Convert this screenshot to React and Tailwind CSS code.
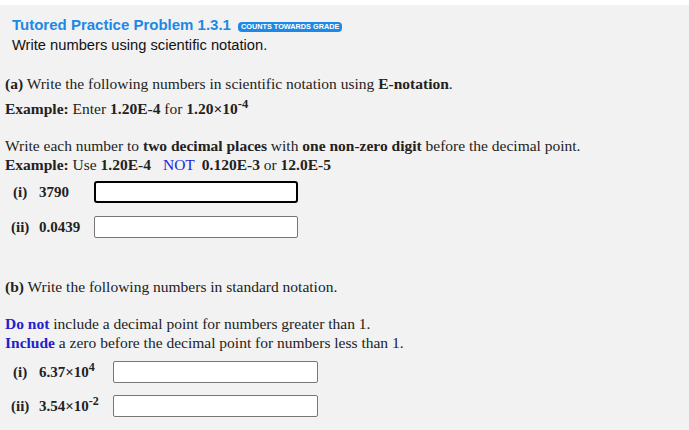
export default function App() {
  const serif = "font-['Liberation_Serif',serif]";
  return (
    <div className="min-h-[430px] w-[689px] bg-white">
      <div className="h-[5px] bg-white" />
      <div className="min-h-[425px] bg-[#f2f2f2] pb-4">
        <div className="px-3 pt-[11px] font-['Liberation_Sans',Arial,sans-serif]">
          <div className="flex items-center leading-[18px]">
            <span className="text-[15px] font-bold text-[#1e88e5]">Tutored Practice Problem 1.3.1</span>
            <span className="ml-[7px] mt-[3px] rounded-[4px] bg-[#1e88e5] px-[3px] text-[7.3px] leading-[10px] font-bold text-white">
              COUNTS TOWARDS GRADE
            </span>
          </div>
          <div className="mt-[2px] text-[14.7px] leading-[18px] text-[#111]">Write numbers using scientific notation.</div>
        </div>

        <div className={`${serif} px-[5px] text-[15.5px] leading-[19px] text-[#222]`}>
          <p className="mt-[20px]">
            <b>(a)</b> Write the following numbers in scientific notation using <b>E-notation</b>.
          </p>
          <p className="mt-[6px]">
            <b>Example:</b> Enter <b>1.20E-4</b> for <b>1.20×10<sup className="text-[12.5px]">-4</sup></b>
          </p>

          <p className="mt-[18px]">
            Write each number to <b>two decimal places</b> with <b>one non-zero digit</b> before the decimal point.
          </p>
          <p>
            <b>Example:</b> Use <b>1.20E-4</b>
            <span className="ml-[12px] text-[#2222dd]">NOT</span>
            <b className="ml-[7px]">0.120E-3</b> or <b>12.0E-5</b>
          </p>

          <div className="mt-[7px] flex flex-col gap-[13px] text-[15px]">
            <div className="flex items-center">
              <b className="ml-[8px] w-[26px]">(i)</b>
              <b className="w-[55px]">3790</b>
              <input className="h-[22px] w-[204px] rounded-[3px] border-2 border-black bg-white px-1 outline-none" defaultValue="" />
            </div>
            <div className="flex items-center">
              <b className="ml-[6px] w-[28px]">(ii)</b>
              <b className="w-[55px]">0.0439</b>
              <input className="h-[22px] w-[204px] rounded-[2px] border border-[#767676] bg-white px-1 outline-none" />
            </div>
          </div>

          <p className="mt-[39px]">
            <b>(b)</b> Write the following numbers in standard notation.
          </p>

          <p className="mt-[18px]">
            <b className="text-[#2222cc]">Do not</b> include a decimal point for numbers greater than 1.
          </p>
          <p>
            <b className="text-[#2222cc]">Include</b> a zero before the decimal point for numbers less than 1.
          </p>

          <div className="mt-[9px] flex flex-col gap-[12px] text-[15px]">
            <div className="flex items-center">
              <b className="ml-[8px] w-[26px]">(i)</b>
              <b className="w-[74px]">
                6.37×10<sup className="text-[12px]">4</sup>
              </b>
              <input className="h-[22px] w-[205px] rounded-[2px] border border-[#767676] bg-white px-1 outline-none" />
            </div>
            <div className="flex items-center">
              <b className="ml-[6px] w-[28px]">(ii)</b>
              <b className="w-[74px]">
                3.54×10<sup className="text-[12px]">-2</sup>
              </b>
              <input className="h-[22px] w-[205px] rounded-[2px] border border-[#767676] bg-white px-1 outline-none" />
            </div>
          </div>
        </div>
      </div>
    </div>
  );
}
